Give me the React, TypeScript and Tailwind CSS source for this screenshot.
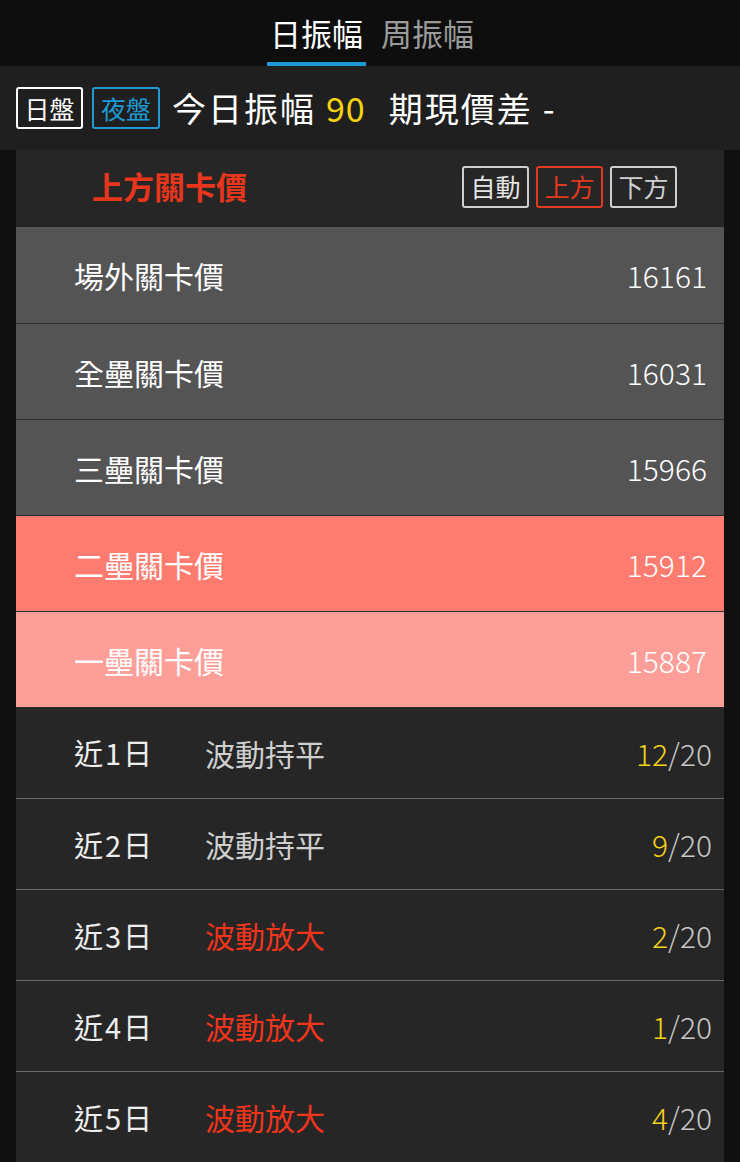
import React from 'react';

const FONT = '"Noto Sans CJK TC", "Noto Sans", sans-serif';

type Level = { label: string; value: string; tone: 'gray' | 'red' | 'pink' };

const LEVELS: Level[] = [
  { label: '場外關卡價', value: '16161', tone: 'gray' },
  { label: '全壘關卡價', value: '16031', tone: 'gray' },
  { label: '三壘關卡價', value: '15966', tone: 'gray' },
  { label: '二壘關卡價', value: '15912', tone: 'red' },
  { label: '一壘關卡價', value: '15887', tone: 'pink' },
];

type Stat = { day: string; status: string; hot: boolean; hit: string };

const STATS: Stat[] = [
  { day: '近1日', status: '波動持平', hot: false, hit: '12' },
  { day: '近2日', status: '波動持平', hot: false, hit: '9' },
  { day: '近3日', status: '波動放大', hot: true, hit: '2' },
  { day: '近4日', status: '波動放大', hot: true, hit: '1' },
  { day: '近5日', status: '波動放大', hot: true, hit: '4' },
];

function toneClass(tone: Level['tone']): string {
  switch (tone) {
    case 'red': return 'bg-[#fe7b6f]';
    case 'pink': return 'bg-[#fd9f98]';
    default: return 'bg-[#545454]';
  }
}

export default function App() {
  return (
    <div className="min-h-[1162px] w-[740px] bg-[#101010] text-white" style={{ fontFamily: FONT }}>
      {/* tabs */}
      <div className="flex h-[66px] items-end justify-center gap-[14px] bg-[#0e0e0e]">
        <div className="flex flex-col items-center">
          <span className="px-1 text-[31px] leading-[58px] text-white">日振幅</span>
          <span className="h-[4px] w-[99px] bg-[#1b9ad6]" />
        </div>
        <div className="flex flex-col items-center">
          <span className="text-[31px] leading-[58px] text-[#9a9a9a]">周振幅</span>
          <span className="h-[4px]" />
        </div>
      </div>

      {/* session + amplitude */}
      <div className="flex h-[84px] items-center bg-[#1f1f1f] px-4">
        <span className="flex h-[42px] w-[67px] items-center justify-center rounded-[3px] border-2 border-white text-[25px] leading-none">日盤</span>
        <span className="ml-[9px] flex h-[42px] w-[68px] items-center justify-center rounded-[3px] border-2 border-[#1e9bd7] text-[25px] leading-none text-[#1e9bd7]">夜盤</span>
        <span className="ml-[12px] text-[34px] leading-none tracking-[2px]">今日振幅</span>
        <span className="ml-[10px] text-[34px] leading-none tracking-[1px] text-[#f5d20f]">90</span>
        <span className="ml-[23px] text-[34px] leading-none tracking-[2px]">期現價差</span>
        <span className="ml-[10px] text-[34px] leading-none">-</span>
      </div>

      {/* card */}
      <div className="mx-4 bg-[#262626]">
        <div className="flex h-[77px] items-center justify-between pb-[4px] pl-[76px] pr-[47px]">
          <span className="text-[31px] font-bold text-[#e8361d]">上方關卡價</span>
          <div className="flex gap-[7px]">
            <span className="flex h-[42px] w-[67px] items-center justify-center rounded-[3px] border-2 border-[#cfcfcf] text-[25px] leading-none text-[#e6e6e6]">自動</span>
            <span className="flex h-[42px] w-[67px] items-center justify-center rounded-[3px] border-2 border-[#e2391f] text-[25px] leading-none text-[#e2391f]">上方</span>
            <span className="flex h-[42px] w-[67px] items-center justify-center rounded-[3px] border-2 border-[#cfcfcf] text-[25px] leading-none text-[#d0d0d0]">下方</span>
          </div>
        </div>

        {LEVELS.map((l, i) => (
          <div
            key={l.label}
            className={`flex h-[96px] items-center justify-between pl-[58px] pr-[17px] ${toneClass(l.tone)} ${i > 0 ? 'border-t border-[#2e2e2e]' : ''}`}
          >
            <span className="text-[30px] leading-none">{l.label}</span>
            <span className="text-[30px] font-light leading-none">{l.value}</span>
          </div>
        ))}

        {STATS.map((s, i) => (
          <div
            key={s.day}
            className={`flex h-[91px] items-center pl-[58px] pr-[12px] ${i > 0 ? 'border-t border-[#6a6a6a]' : ''}`}
          >
            <span className="text-[29px] leading-none tracking-[2px] text-[#eeeeee]">{s.day}</span>
            <span className={`ml-[51px] text-[30px] leading-none ${s.hot ? 'text-[#f0351d]' : 'text-[#cfcfcf]'}`}>{s.status}</span>
            <span className="ml-auto text-[30px] font-light leading-none text-[#c8c8c8]">
              <span className="text-[#f3d21b]">{s.hit}</span>/20
            </span>
          </div>
        ))}
      </div>
    </div>
  );
}
